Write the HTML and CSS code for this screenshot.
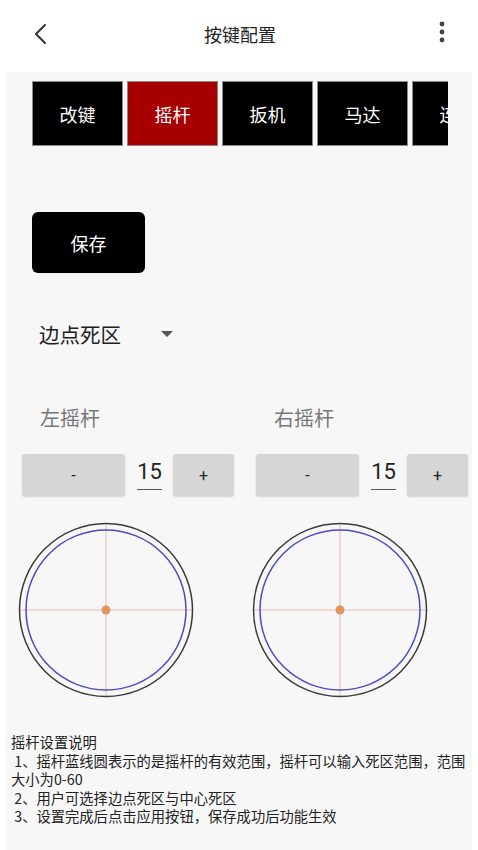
FILE: index.html
```html
<!DOCTYPE html>
<html lang="zh-CN">
<head>
<meta charset="utf-8">
<title>按键配置</title>
<link rel="stylesheet" href="styles.css">
</head>
<body>
<header class="topbar">
  <svg class="back" width="14" height="20" viewBox="0 0 14 20"><path d="M11 1 L2 10 L11 19" fill="none" stroke="#333" stroke-width="2" stroke-linecap="round" stroke-linejoin="round"/></svg>
  <div class="title">按键配置</div>
  <svg class="more" width="8" height="22" viewBox="0 0 8 22"><circle cx="4" cy="3" r="2.4" fill="#444"/><circle cx="4" cy="11" r="2.4" fill="#444"/><circle cx="4" cy="19" r="2.4" fill="#444"/></svg>
</header>
<main class="panel">
  <nav class="tabs">
    <div class="tab">改键</div>
    <div class="tab active">摇杆</div>
    <div class="tab">扳机</div>
    <div class="tab">马达</div>
    <div class="tab">连发</div>
  </nav>
  <button class="save">保存</button>
  <div class="select">
    <span class="select-text">边点死区</span>
    <span class="caret"></span>
  </div>
  <section class="sticks">
    <div class="stick">
      <div class="stick-label">左摇杆</div>
      <div class="controls">
        <div class="btn minus">-</div>
        <div class="value">15</div>
        <div class="btn plus">+</div>
      </div>
      <svg class="dial" width="180" height="180" viewBox="0 0 180 180">
        <line x1="3" y1="90" x2="177" y2="90" stroke="#e6b9b9" stroke-width="1"/>
        <line x1="90" y1="3" x2="90" y2="177" stroke="#e6b9b9" stroke-width="1"/>
        <circle cx="90" cy="90" r="86.5" fill="none" stroke="#3a3a3a" stroke-width="1.5"/>
        <circle cx="90" cy="90" r="80" fill="none" stroke="#4b4bc4" stroke-width="1.5"/>
        <circle cx="90" cy="90" r="4.5" fill="#e0955c"/>
      </svg>
    </div>
    <div class="stick">
      <div class="stick-label">右摇杆</div>
      <div class="controls">
        <div class="btn minus">-</div>
        <div class="value">15</div>
        <div class="btn plus">+</div>
      </div>
      <svg class="dial" width="180" height="180" viewBox="0 0 180 180">
        <line x1="3" y1="90" x2="177" y2="90" stroke="#e6b9b9" stroke-width="1"/>
        <line x1="90" y1="3" x2="90" y2="177" stroke="#e6b9b9" stroke-width="1"/>
        <circle cx="90" cy="90" r="86.5" fill="none" stroke="#3a3a3a" stroke-width="1.5"/>
        <circle cx="90" cy="90" r="80" fill="none" stroke="#4b4bc4" stroke-width="1.5"/>
        <circle cx="90" cy="90" r="4.5" fill="#e0955c"/>
      </svg>
    </div>
  </section>
  <section class="notes">
    <div class="note">摇杆设置说明</div>
    <div class="note"> 1、摇杆蓝线圆表示的是摇杆的有效范围，摇杆可以输入死区范围，范围大小为0-60</div>
    <div class="note"> 2、用户可选择边点死区与中心死区</div>
    <div class="note"> 3、设置完成后点击应用按钮，保存成功后功能生效</div>
  </section>
</main>
</body>
</html>
```
FILE: styles.css
```css
* { box-sizing: border-box; }
html, body { margin: 0; padding: 0; }
body {
  width: 478px;
  height: 850px;
  overflow: hidden;
  background: #ffffff;
  font-family: "Noto Sans CJK SC", "Noto Sans", Roboto, sans-serif;
  color: #222;
}
.topbar {
  height: 72px;
  display: grid;
  grid-template-columns: 1fr auto 1fr;
  align-items: center;
  padding: 0 32px 4px 34px;
  background: #fff;
}
.back { display: block; justify-self: start; }
.title {
  font-size: 18px;
  color: #222;
  line-height: 24px;
}
.more { display: block; justify-self: end; margin-top: -4px; }
.panel {
  margin: 0 6px;
  height: 778px;
  background: #f7f7f7;
  padding-top: 9px;
}
.tabs {
  display: flex;
  gap: 4px;
  margin-left: 26px;
  width: 416px;
  overflow: hidden;
}
.tab {
  flex: 0 0 91px;
  height: 65px;
  background: #000;
  border: 1px solid #8a8a8a;
  color: #fff;
  font-size: 18px;
  display: flex;
  align-items: center;
  justify-content: center;
}
.tab.active { background: #a60000; }
.save {
  display: block;
  margin: 66px 0 0 26px;
  width: 113px;
  height: 61px;
  border: none;
  border-radius: 6px;
  background: #000;
  color: #fff;
  font-family: inherit;
  font-size: 18px;
  padding: 0;
}
.select {
  display: flex;
  align-items: center;
  margin: 47px 0 0 33px;
  height: 28px;
}
.select-text { font-size: 20.5px; line-height: 28px; color: #222; }
.caret {
  width: 0; height: 0;
  margin-left: 40px;
  border-left: 6px solid transparent;
  border-right: 6px solid transparent;
  border-top: 6px solid #555;
}
.sticks {
  display: grid;
  grid-template-columns: 234px 234px;
  margin: 56px 0 0 10px;
}
.stick-label {
  font-size: 20px;
  line-height: 28px;
  color: #777;
  margin-left: 24px;
}
.controls {
  display: flex;
  align-items: center;
  margin: 22px 0 0 6px;
  height: 42px;
}
.btn {
  height: 42px;
  background: #d6d6d6;
  border-radius: 3px;
  box-shadow: 0 1px 2px rgba(0,0,0,0.15);
  display: flex;
  align-items: center;
  justify-content: center;
  font-family: Roboto, "Noto Sans", sans-serif;
  font-size: 16px;
  color: #222;
}
.minus { width: 103px; }
.plus { width: 61px; }
.value {
  width: 25px;
  margin: 0 11px 0 12px;
  font-family: Roboto, sans-serif;
  font-size: 22px;
  line-height: 30px;
  color: #222;
  text-align: center;
  border-bottom: 1px solid #555;
  padding-bottom: 2px;
  margin-top: -4px;
}
.dial {
  display: block;
  margin-top: 24px;
}
.notes {
  margin-top: 33px;
  padding-left: 5px;
  padding-right: 0;
  font-size: 14.3px;
  line-height: 18.5px;
  color: #222;
}
.note { white-space: pre-wrap; }
```
